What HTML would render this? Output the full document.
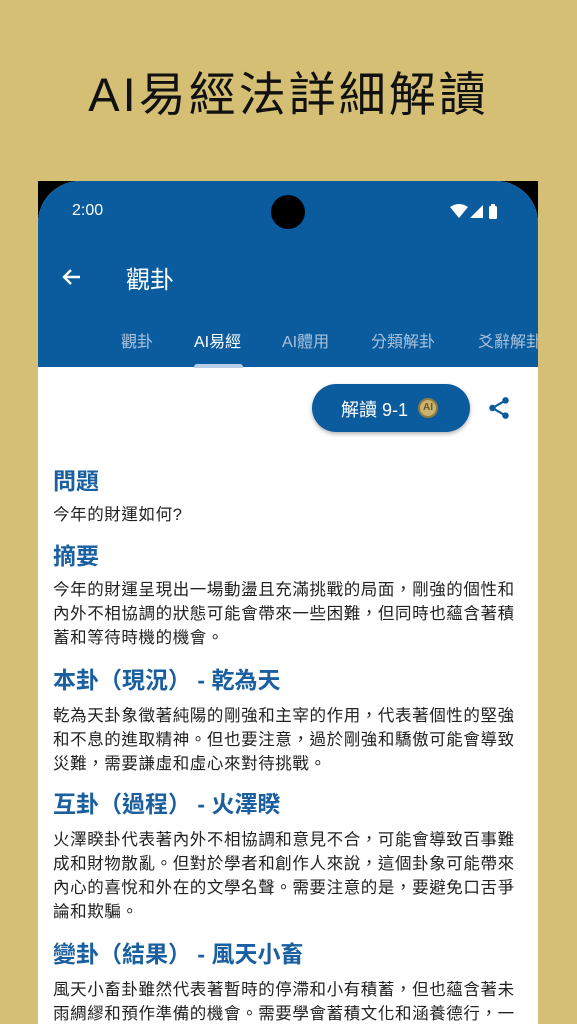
<!DOCTYPE html>
<html><head><meta charset="utf-8"><style>
*{margin:0;padding:0;box-sizing:border-box}
body{width:577px;height:1024px;background:#d4bf74;position:relative;overflow:hidden;font-family:"Liberation Sans","Noto Sans CJK TC",sans-serif}
.title{position:absolute;top:56px;left:0;width:577px;text-align:center;font-size:47px;color:#111;letter-spacing:3px;white-space:nowrap}
.phone{position:absolute;left:38px;top:181px;width:500px;height:843px;background:#000;overflow:hidden}
.screen{position:absolute;left:0;top:0;width:500px;height:843px;background:#fff;border-radius:42px 42px 0 0;overflow:hidden}
.bar{position:absolute;left:0;top:0;width:500px;height:186px;background:#0b5c9e}
.time{position:absolute;left:34px;top:21px;color:#fff;font-size:16px}
.cam{position:absolute;left:233px;top:14px;width:34px;height:34px;border-radius:50%;background:#000}
.tabs span{position:absolute;top:147px;font-size:16px;color:#a9c2dc;white-space:nowrap}
.ind{position:absolute;left:156px;top:183px;width:49px;height:4px;background:#b9d0ea;border-radius:3px 3px 0 0}
.btn{position:absolute;left:274px;top:203px;width:158px;height:48px;border-radius:24px;background:#0b5c9e;box-shadow:0 2px 4px rgba(0,0,0,.3);color:#fff;font-size:18px}
.content{position:absolute;left:15px;top:0;width:480px}
h2{position:absolute;left:0;color:#1a5fa0;font-size:23px;font-weight:bold;white-space:nowrap}
p{position:absolute;left:0;color:#222;font-size:16.5px;line-height:24px;white-space:nowrap;letter-spacing:.6px}
</style></head><body>
<div class="title">AI易經法詳細解讀</div>
<div class="phone"><div class="screen">
<div class="bar">
<div class="time">2:00</div>
<div class="cam"></div>
<svg style="position:absolute;left:412px;top:23px" width="56" height="16" viewBox="0 0 56 16">
<path d="M0 3 Q9 -3 18 3 L9 14 Z" fill="#fff"/>
<path d="M20 14 L33 1 L33 14 Z" fill="#fff"/>
<rect x="39" y="2" width="8" height="13" rx="1.5" fill="#fff"/><rect x="41" y="0" width="4" height="3" fill="#fff"/>
</svg>
<svg style="position:absolute;left:22px;top:84px" width="24" height="24" viewBox="0 0 24 24"><path d="M20 12H5M11 5l-7 7 7 7" stroke="#fff" stroke-width="2.4" fill="none"/></svg>
<div style="position:absolute;left:88px;top:79px;color:#fff;font-size:24px">觀卦</div>
<div class="tabs"><span style="left:83px">觀卦</span><span style="left:156px;color:#fff">AI易經</span><span style="left:244px">AI體用</span><span style="left:333px">分類解卦</span><span style="left:440px">爻辭解卦</span></div>
<div class="ind"></div>
</div>
<div class="btn"><span style="position:absolute;left:29px;top:12px">解讀 9-1</span>
<div style="position:absolute;left:106px;top:14px;width:20px;height:20px;border-radius:50%;background:#c9b36e;border:2px solid #8f7a3f;font-size:10px;font-weight:bold;color:#6b5a2a;text-align:center;line-height:16px">AI</div></div>
<svg style="position:absolute;left:448px;top:214px" width="26" height="26" viewBox="0 0 24 24"><circle cx="18" cy="5" r="3" fill="#0b5c9e"/><circle cx="6" cy="12" r="3" fill="#0b5c9e"/><circle cx="18" cy="19" r="3" fill="#0b5c9e"/><path d="M18 5L6 12L18 19" stroke="#0b5c9e" stroke-width="2" fill="none"/></svg>
<div class="content">
<h2 style="top:281px">問題</h2>
<p style="top:322px">今年的財運如何?</p>
<h2 style="top:356px">摘要</h2>
<p style="top:397px">今年的財運呈現出一場動盪且充滿挑戰的局面，剛強的個性和<br>內外不相協調的狀態可能會帶來一些困難，但同時也蘊含著積<br>蓄和等待時機的機會。</p>
<h2 style="top:480px">本卦（現況） - 乾為天</h2>
<p style="top:523px">乾為天卦象徵著純陽的剛強和主宰的作用，代表著個性的堅強<br>和不息的進取精神。但也要注意，過於剛強和驕傲可能會導致<br>災難，需要謙虛和虛心來對待挑戰。</p>
<h2 style="top:604px">互卦（過程） - 火澤睽</h2>
<p style="top:647px">火澤睽卦代表著內外不相協調和意見不合，可能會導致百事難<br>成和財物散亂。但對於學者和創作人來說，這個卦象可能帶來<br>內心的喜悅和外在的文學名聲。需要注意的是，要避免口舌爭<br>論和欺騙。</p>
<h2 style="top:754px">變卦（結果） - 風天小畜</h2>
<p style="top:797px">風天小畜卦雖然代表著暫時的停滯和小有積蓄，但也蘊含著未<br>雨綢繆和預作準備的機會。需要學會蓄積文化和涵養德行，一</p>
</div>
</div></div>
</body></html>
